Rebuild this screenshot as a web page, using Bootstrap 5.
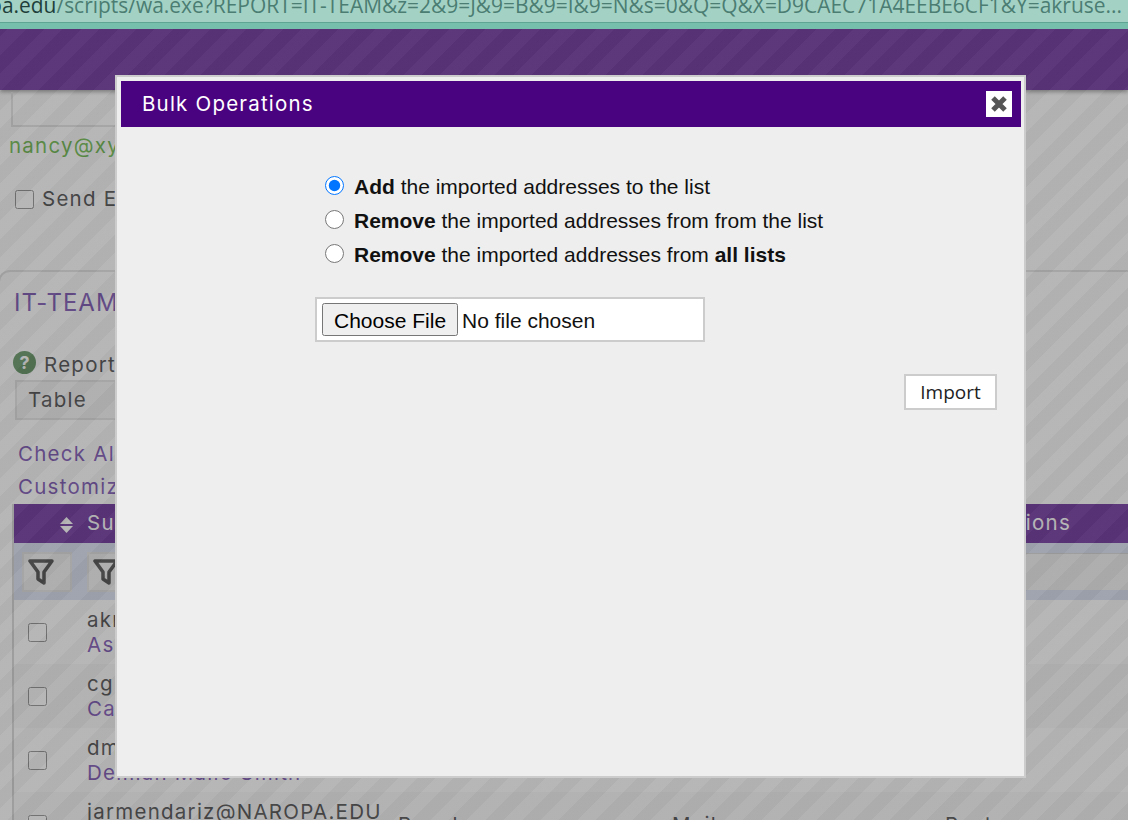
<!DOCTYPE html>
<html lang="en">
<head>
    <meta charset="UTF-8">
    <meta name="viewport" content="width=device-width, initial-scale=1.0">
    <title>Bulk Operations</title>
    <link href="https://cdn.jsdelivr.net/npm/bootstrap@5.3.3/dist/css/bootstrap.min.css" rel="stylesheet">
    <style>
        html, body {
            height: 100%;
        }
        body {
            overflow: hidden;
            background: #fff;
            color: #222;
            font-family: Inter, "Liberation Sans", sans-serif;
            font-size: 20.5px;
            letter-spacing: 1.25px;
        }
        a {
            color: #5b2a9e;
            text-decoration: none;
        }
        /* browser address bar, sits over the backdrop */
        .url-strip {
            position: relative;
            z-index: 1060;
            height: 29px;
            background: #a3d2c5;
            border-bottom: 6px solid #76bfac;
            box-shadow: inset 0 -1px 0 #5fa593;
            overflow: hidden;
            padding-right: 6px;
            font-family: "Open Sans", "Noto Sans", sans-serif;
            font-size: 20.95px;
            letter-spacing: 0;
            line-height: 10px;
            color: #4b7d72;
        }
        .url-strip b {
            font-weight: 400;
            color: #1e3f3a;
        }
        .top-band {
            height: 61px;
            background: #4b0082;
            box-shadow: 0 2px 4px rgba(0, 0, 0, .45);
        }
        .name-field {
            width: 700px;
            height: 35px;
            margin: 2px 0 0 11px;
            border: 2px solid #ddd;
            border-top: 0;
        }
        .green-mail {
            margin: 6px 0 0 9px;
            line-height: 26px;
            color: #4aa91c;
        }
        .send-row {
            margin: 27px 0 0 15px;
            height: 26px;
        }
        .page-box {
            margin: 58px 0 0 -2px;
            padding: 0 0 0 16px;
            border: 2px solid #ddd;
            border-radius: 12px 0 0 0;
            border-right: 0;
        }
        .list-title {
            margin: 16px 0 0 -2px;
            font-size: 24px;
            line-height: 30px;
            letter-spacing: 1px;
            color: #5b2a9e;
            font-weight: 400;
        }
        .help-dot {
            width: 23px;
            height: 23px;
            margin-bottom: 4px;
            background: #3a7a3a;
            color: #fff;
            font-size: 18px;
            font-weight: 700;
            letter-spacing: 0;
        }
        .report-row {
            margin: 31px 0 0 -3px;
            height: 31px;
        }
        .report-label {
            margin-top: 2px;
        }
        .table-pick {
            width: 300px;
            height: 40px;
            margin: 0 0 0 -1px;
            padding: 0 11px;
            border: 2px solid #ddd;
            border-radius: 0;
            background-color: #f2f2f2;
            font-size: 20.5px;
            letter-spacing: 1.25px;
            color: #222;
        }
        .link-stack {
            margin: 17px 0 0 2px;
            line-height: 33px;
        }
        .sub-table {
            table-layout: fixed;
            width: 1116px;
            margin: 1px 0 0 -4px;
            border-collapse: collapse;
            border-left: 2px solid #ccc;
        }
        .sub-table th {
            height: 39px;
            padding: 0;
            background: #4b0082;
            color: #fff;
            font-weight: 400;
        }
        .sub-table td {
            padding: 0;
            vertical-align: middle;
            line-height: 25px;
            height: 64px;
        }
        .sub-table tr.even-row td {
            background: #f7f7f7;
        }
        .sub-table tr.filter-row td {
            height: 57px;
            background: #d0daec;
            vertical-align: middle;
        }
        .sort-arrows {
            margin-right: 14px;
        }
        .last-head {
            padding-right: 58px !important;
        }
        .filter-first {
            padding-left: 8px !important;
        }
        .filter-btn {
            width: 50px;
            height: 40px;
            padding: 0 12px 0 0;
            background: #eee;
            border: 2px solid #ddd;
            border-radius: 0;
        }
        .filter-input {
            display: block;
            width: 100%;
            height: 37px;
            background: #eee;
            border: 0;
            border-top: 1px solid #ccc;
        }
        .row-box {
            width: 19px;
            height: 19px;
            margin: 0 0 3px 14px;
            vertical-align: middle;
        }
        /* striped overlay behind the dialog */
        .stripe-backdrop {
            opacity: 1;
            background: repeating-linear-gradient(135deg, rgba(111, 111, 113, .5) 0, rgba(111, 111, 113, .5) 13px, rgba(99, 99, 101, .5) 13px, rgba(99, 99, 101, .5) 26px);
        }
        .bulk-dialog {
            width: 911px;
            max-width: none;
            margin: 75px 0 0 115px;
        }
        .bulk-content {
            height: 703px;
            background: #eee;
            border: 2px solid #ccc;
            border-radius: 0;
        }
        .bulk-head {
            height: 46px;
            margin: 4px 3px 0 4px;
            padding: 0 9px 0 21px;
            background: #4a0380;
            border: 0;
            border-radius: 0;
        }
        .bulk-title {
            font-size: 20.5px;
            line-height: 46px;
            color: #fff;
            letter-spacing: 1.2px;
            font-weight: 400;
        }
        .close-square {
            width: 26px;
            height: 26px;
            padding: 3px;
            background: #fff;
            border: 0;
        }
        .bulk-body {
            padding: 43px 27px 0 198px;
            font-family: "Liberation Sans", Arial, sans-serif;
            font-size: 21px;
            letter-spacing: 0;
            color: #111;
        }
        .pick-row {
            height: 34px;
            margin: 0 0 0 10px;
            line-height: 34px;
        }
        .pick-row input {
            width: 19px;
            height: 19px;
            margin: 0 10px 4px 0;
            flex: none;
        }
        .file-box {
            width: 390px;
            height: 45px;
            margin-top: 25px;
            padding: 4px 5px;
            background: #fff;
            border: 2px solid #ccc;
        }
        .file-box input {
            width: 100%;
            font-family: "Liberation Sans", Arial, sans-serif;
            font-size: 21px;
        }
        .file-box input::file-selector-button {
            height: 33px;
            padding: 0 10px 2px;
            margin-right: 4px;
        }
        .import-btn {
            width: 93px;
            height: 36px;
            margin-top: 32px;
            padding: 0;
            background: #fff;
            border: 2px solid #ccc;
            border-radius: 0;
            font-family: "Open Sans", "Noto Sans", sans-serif;
            font-size: 19px;
            letter-spacing: 0;
            color: #222;
        }
    </style>
</head>
<body>
    <div class="url-strip d-flex justify-content-end text-nowrap"><span><b>lists.naropa.edu</b>/scripts/wa.exe?REPORT=IT-TEAM&amp;z=2&amp;9=J&amp;9=B&amp;9=I&amp;9=N&amp;s=0&amp;Q=Q&amp;X=D9CAEC71A4EEBE6CF1&amp;Y=akruse...</span></div>

    <div class="top-band"></div>

    <div class="name-field"></div>
    <div class="green-mail">nancy@xy</div>
    <div class="send-row d-flex align-items-center gap-2">
        <input class="row-box ms-0 mb-0" type="checkbox" id="sendMail">
        <label for="sendMail">Send E</label>
    </div>

    <div class="page-box">
        <h2 class="list-title">IT-TEAM</h2>
        <div class="report-row d-flex align-items-center gap-2">
            <span class="help-dot rounded-circle d-flex align-items-center justify-content-center">?</span>
            <span class="report-label">Report</span>
        </div>
        <select class="table-pick form-select"><option>Table</option></select>
        <div class="link-stack">
            <div><a href="#">Check All</a></div>
            <div><a href="#">Customize</a></div>
        </div>
        <table class="sub-table">
            <colgroup>
                <col style="width: 74px">
                <col style="width: 311px">
                <col style="width: 274px">
                <col style="width: 273px">
                <col style="width: 184px">
            </colgroup>
            <tr>
                <th class="text-end">
                    <svg class="sort-arrows" width="13" height="16" viewBox="0 0 13 16" fill="#fff"><path d="M6.5 0 13 7H0z"/><path d="M0 9h13l-6.5 7z"/></svg>
                </th>
                <th>Su</th>
                <th></th>
                <th></th>
                <th class="text-end last-head">ions</th>
            </tr>
            <tr class="filter-row">
                <td class="filter-first">
                    <button class="filter-btn" type="button"><svg width="26" height="28" viewBox="0 0 26 28" fill="none" stroke="#222" stroke-width="3.5" stroke-linejoin="round"><path d="M2 3h22l-8 11v11l-6-4v-7z"/></svg></button>
                </td>
                <td>
                    <button class="filter-btn" type="button"><svg width="26" height="28" viewBox="0 0 26 28" fill="none" stroke="#222" stroke-width="3.5" stroke-linejoin="round"><path d="M2 3h22l-8 11v11l-6-4v-7z"/></svg></button>
                </td>
                <td></td>
                <td></td>
                <td><input class="filter-input" type="text" aria-label="Filter"></td>
            </tr>
            <tr>
                <td><input class="row-box" type="checkbox" aria-label="Select"></td>
                <td>akr<br><a href="#">Asl</a></td>
                <td></td><td></td><td></td>
            </tr>
            <tr class="even-row">
                <td><input class="row-box" type="checkbox" aria-label="Select"></td>
                <td>cg<br><a href="#">Ca</a></td>
                <td></td><td></td><td></td>
            </tr>
            <tr>
                <td><input class="row-box" type="checkbox" aria-label="Select"></td>
                <td>dm<br><a href="#">Demian Mallo Smith</a></td>
                <td></td><td></td><td></td>
            </tr>
            <tr class="even-row">
                <td><input class="row-box" type="checkbox" aria-label="Select"></td>
                <td>jarmendariz@NAROPA.EDU<br>&nbsp;</td>
                <td>Regular</td>
                <td>Mail</td>
                <td>Post</td>
            </tr>
        </table>
    </div>

    <div class="modal-backdrop stripe-backdrop"></div>

    <div class="modal d-block" tabindex="-1">
        <div class="modal-dialog bulk-dialog">
            <div class="modal-content bulk-content">
                <div class="modal-header bulk-head d-flex justify-content-between">
                    <h5 class="modal-title bulk-title">Bulk Operations</h5>
                    <button class="close-square d-flex" type="button" aria-label="Close">
                        <svg width="20" height="20" viewBox="0 0 20 20" stroke="#555" stroke-width="5"><path d="M4 4 16 16M16 4 4 16"/></svg>
                    </button>
                </div>
                <div class="modal-body bulk-body">
                    <div class="pick-row d-flex align-items-center">
                        <input type="radio" name="mode" id="modeAdd" checked>
                        <label for="modeAdd"><strong>Add</strong> the imported addresses to the list</label>
                    </div>
                    <div class="pick-row d-flex align-items-center">
                        <input type="radio" name="mode" id="modeRemove">
                        <label for="modeRemove"><strong>Remove</strong> the imported addresses from from the list</label>
                    </div>
                    <div class="pick-row d-flex align-items-center">
                        <input type="radio" name="mode" id="modeAll">
                        <label for="modeAll"><strong>Remove</strong> the imported addresses from <strong>all lists</strong></label>
                    </div>
                    <div class="file-box">
                        <input type="file" aria-label="File">
                    </div>
                    <div class="d-flex justify-content-end">
                        <button class="import-btn" type="button">Import</button>
                    </div>
                </div>
            </div>
        </div>
    </div>

    <script src="https://cdn.jsdelivr.net/npm/bootstrap@5.3.3/dist/js/bootstrap.bundle.min.js"></script>
</body>
</html>
